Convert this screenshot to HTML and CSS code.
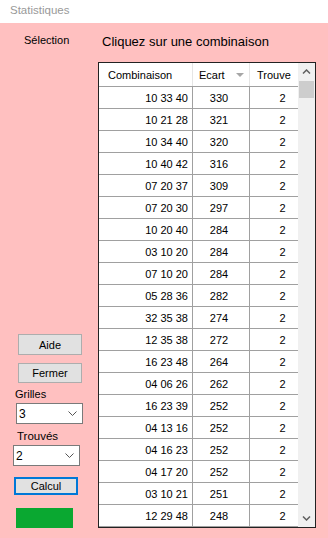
FILE: index.html
```html
<!DOCTYPE html>
<html lang="fr">
<head>
  <meta charset="UTF-8">
  <meta name="viewport" content="width=device-width, initial-scale=1.0">
  <title>Statistiques</title>
  <link rel="stylesheet" href="styles.css">
</head>
<body>

  <div class="titlebar">Statistiques</div>

  <div class="window">
    <div class="side">
      <div class="selection">Sélection</div>

      <div class="controls">
        <button class="btn btn-aide">Aide</button>
        <button class="btn btn-fermer">Fermer</button>
        <div class="lbl lbl-grilles">Grilles</div>
        <div class="combo combo-grilles">
          <span>3</span>
          <svg width="9" height="5" viewBox="0 0 9 5"><path d="M0.5 0.5 L4.5 4.5 L8.5 0.5" fill="none" stroke="#555" stroke-width="1"/></svg>
        </div>
        <div class="lbl lbl-trouves">Trouvés</div>
        <div class="combo combo-trouves">
          <span>2</span>
          <svg width="9" height="5" viewBox="0 0 9 5"><path d="M0.5 0.5 L4.5 4.5 L8.5 0.5" fill="none" stroke="#555" stroke-width="1"/></svg>
        </div>
        <button class="btn btn-calcul">Calcul</button>
        <div class="status"></div>
      </div>
    </div>

    <div class="content">
      <div class="heading">Cliquez sur une combinaison</div>

      <div class="grid">
        <div class="row head">
          <div class="cell c1">Combinaison</div>
          <div class="cell c2"><span>Ecart</span><svg width="8" height="4" viewBox="0 0 8 4"><path d="M0 0 L8 0 L4 4 Z" fill="#a6a6a6"/></svg></div>
          <div class="cell c3">Trouve</div>
        </div>

        <div class="body">
          <div class="row"><div class="cell c1">10 33 40</div><div class="cell c2">330</div><div class="cell c3">2</div></div>
          <div class="row"><div class="cell c1">10 21 28</div><div class="cell c2">321</div><div class="cell c3">2</div></div>
          <div class="row"><div class="cell c1">10 34 40</div><div class="cell c2">320</div><div class="cell c3">2</div></div>
          <div class="row"><div class="cell c1">10 40 42</div><div class="cell c2">316</div><div class="cell c3">2</div></div>
          <div class="row"><div class="cell c1">07 20 37</div><div class="cell c2">309</div><div class="cell c3">2</div></div>
          <div class="row"><div class="cell c1">07 20 30</div><div class="cell c2">297</div><div class="cell c3">2</div></div>
          <div class="row"><div class="cell c1">10 20 40</div><div class="cell c2">284</div><div class="cell c3">2</div></div>
          <div class="row"><div class="cell c1">03 10 20</div><div class="cell c2">284</div><div class="cell c3">2</div></div>
          <div class="row"><div class="cell c1">07 10 20</div><div class="cell c2">284</div><div class="cell c3">2</div></div>
          <div class="row"><div class="cell c1">05 28 36</div><div class="cell c2">282</div><div class="cell c3">2</div></div>
          <div class="row"><div class="cell c1">32 35 38</div><div class="cell c2">274</div><div class="cell c3">2</div></div>
          <div class="row"><div class="cell c1">12 35 38</div><div class="cell c2">272</div><div class="cell c3">2</div></div>
          <div class="row"><div class="cell c1">16 23 48</div><div class="cell c2">264</div><div class="cell c3">2</div></div>
          <div class="row"><div class="cell c1">04 06 26</div><div class="cell c2">262</div><div class="cell c3">2</div></div>
          <div class="row"><div class="cell c1">16 23 39</div><div class="cell c2">252</div><div class="cell c3">2</div></div>
          <div class="row"><div class="cell c1">04 13 16</div><div class="cell c2">252</div><div class="cell c3">2</div></div>
          <div class="row"><div class="cell c1">04 16 23</div><div class="cell c2">252</div><div class="cell c3">2</div></div>
          <div class="row"><div class="cell c1">04 17 20</div><div class="cell c2">252</div><div class="cell c3">2</div></div>
          <div class="row"><div class="cell c1">03 10 21</div><div class="cell c2">251</div><div class="cell c3">2</div></div>
          <div class="row"><div class="cell c1">12 29 48</div><div class="cell c2">248</div><div class="cell c3">2</div></div>
        </div>

        <!-- vertical scrollbar, drawn over the last column -->
        <div class="scrollbar">
          <div class="arrow">
            <svg width="9" height="5" viewBox="0 0 9 5"><path d="M1 4.5 L4.5 1 L8 4.5" fill="none" stroke="#606060" stroke-width="1.5"/></svg>
          </div>
          <div class="thumb"></div>
          <div class="track"></div>
          <div class="arrow">
            <svg width="9" height="5" viewBox="0 0 9 5"><path d="M1 0.5 L4.5 4 L8 0.5" fill="none" stroke="#606060" stroke-width="1.5"/></svg>
          </div>
        </div>
      </div>
    </div>
  </div>

</body>
</html>
```

FILE: styles.css
```css
body {
  margin: 0;
  padding: 0;
  font-family: 'Liberation Sans', Arial, sans-serif;
  font-size: 11px;
  color: #000;
  background-color: #ffc0c0;
  height: 538px;
  display: flex;
  flex-direction: column;
  overflow: hidden;
}

.titlebar {
  height: 23px;
  line-height: 20px;
  padding-left: 10px;
  background-color: #fff;
  color: #999;
  font-size: 11.5px;
}

.window {
  flex: 1;
  display: flex;
}

/* Left column */
.side {
  width: 98px;
  display: flex;
  flex-direction: column;
  padding-bottom: 10px;
}

.selection {
  margin: 10px 0 0 24px;
  line-height: 14px;
}

.controls {
  margin-top: auto;
  display: flex;
  flex-direction: column;
  align-items: flex-start;
}

.btn {
  font-family: inherit;
  font-size: 11px;
  color: #000;
  background-color: #e1e1e1;
  border: 1px solid #adadad;
  padding: 0;
  box-sizing: border-box;
  width: 64px;
}

.btn-aide {
  margin-left: 18px;
  height: 21px;
}

.btn-fermer {
  margin: 8px 0 0 18px;
  height: 20px;
}

.btn-calcul {
  margin: 11px 0 0 14px;
  height: 18px;
  border: 2px solid #0078d7;
}

.lbl {
  line-height: 14px;
}

.lbl-grilles {
  margin: 4px 0 0 15px;
}

.lbl-trouves {
  margin: 5px 0 0 17px;
  font-size: 11.5px;
}

.combo {
  box-sizing: border-box;
  width: 67px;
  height: 21px;
  background-color: #fff;
  border: 1px solid #7a7a7a;
  display: flex;
  align-items: center;
  justify-content: space-between;
  padding: 0 5px 0 2px;
  font-size: 12px;
  margin-top: 2px;
}

.combo-grilles {
  margin-left: 16px;
}

.combo-trouves {
  margin-left: 13px;
}

.status {
  width: 57px;
  height: 20px;
  margin: 13px 0 0 16px;
  background-color: #0aa831;
}

/* Right column */
.content {
  display: flex;
  flex-direction: column;
}

.heading {
  margin: 11px 0 0 4px;
  font-size: 13px;
  line-height: 16px;
}

.grid {
  position: relative;
  margin-top: 12px;
  width: 216px;
  height: 464px;
  border: 1px solid #222;
  background-color: #fff;
  overflow: hidden;
}

.row {
  display: grid;
  grid-template-columns: 94px 57px 65px;
  height: 22px;
  box-sizing: border-box;
  border-bottom: 1px solid #a0a0a0;
}

.cell {
  display: flex;
  align-items: center;
  border-right: 1px solid #a0a0a0;
  white-space: nowrap;
}

.cell.c3 {
  border-right: none;
}

.row .c1 {
  justify-content: flex-end;
  padding-right: 4px;
}

.row .c2 {
  justify-content: center;
  padding-right: 4px;
}

.row .c3 {
  justify-content: center;
}

/* Header row */
.row.head {
  height: 24px;
}

.head .cell {
  border-right-color: #e5e5e5;
}

.head .c1 {
  justify-content: flex-start;
  padding: 0 0 0 9px;
}

.head .c2 {
  justify-content: space-between;
  padding: 0 5px 0 6px;
}

.head .c3 {
  justify-content: flex-start;
  padding-left: 7px;
}

.body {
  height: 440px;
  overflow: hidden;
}

/* Scrollbar */
.scrollbar {
  position: absolute;
  top: 0;
  right: 0;
  bottom: 0;
  width: 17px;
  background-color: #f0f0f0;
  display: flex;
  flex-direction: column;
}

.arrow {
  height: 17px;
  display: flex;
  align-items: center;
  justify-content: center;
}

.thumb {
  height: 17px;
  margin: 1px 1px 0 1px;
  background-color: #cdcdcd;
}

.track {
  flex: 1;
}
```
